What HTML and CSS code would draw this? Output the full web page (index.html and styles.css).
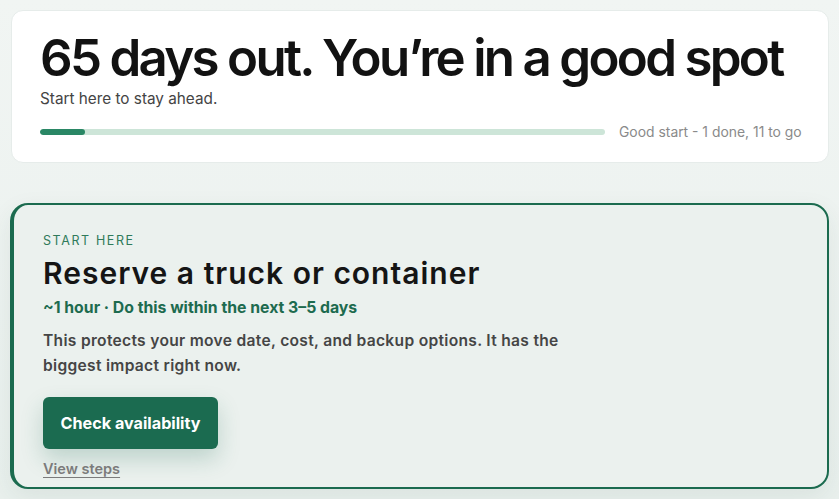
FILE: index.html
```html
<!DOCTYPE html>
<html>
<head>
<meta charset="utf-8">
<link rel="stylesheet" href="styles.css">
</head>
<body>
<main class="page">
  <section class="summary">
    <h1 class="summary-title">65 days out. You’re in a good spot</h1>
    <p class="summary-sub">Start here to stay ahead.</p>
    <div class="progress-row">
      <div class="progress-track"><div class="progress-fill" style="width:8%"></div></div>
      <span class="progress-label">Good start - 1 done, 11 to go</span>
    </div>
  </section>
  <section class="task">
    <div class="eyebrow">START HERE</div>
    <h2 class="task-title">Reserve a truck or container</h2>
    <div class="task-meta">~1 hour · Do this within the next 3–5 days</div>
    <p class="task-desc">This protects your move date, cost, and backup options. It has the biggest impact right now.</p>
    <button class="btn-primary">Check availability</button>
    <a class="link-steps" href="#">View steps</a>
  </section>
</main>
</body>
</html>
```
FILE: styles.css
```css
* { box-sizing: border-box; }
html, body { margin: 0; height: 100%; }
body {
  background: linear-gradient(180deg, #f1f5f3 0%, #e9f0ed 100%);
  font-family: Inter, "Open Sans", sans-serif;
  color: #141414;
  overflow: hidden;
}
.page {
  padding: 10px 10px 0 10px;
  display: flex;
  flex-direction: column;
  gap: 40px;
}
.summary {
  margin-left: 1px;
  background: #fff;
  border: 1px solid #e6ecea;
  border-radius: 12px;
  padding: 22px 28px 0 28px;
  height: 153px;
}
.summary-title {
  margin: 0;
  font-size: 51px;
  line-height: 50px;
  font-weight: 600;
  letter-spacing: -2.7px;
  white-space: nowrap;
  color: #121212;
}
.summary-sub {
  margin: 6px 0 0;
  font-size: 15.3px;
  line-height: 20px;
  color: #444;
}
.progress-row {
  display: flex;
  align-items: center;
  gap: 14px;
  height: 18px;
  margin-top: 14px;
}
.progress-track {
  flex: 0 0 565px;
  height: 6px;
  border-radius: 3px;
  background: #cde5d8;
  overflow: hidden;
}
.progress-fill {
  height: 100%;
  background: #2a8765;
  border-radius: 3px;
}
.progress-label {
  font-size: 13.9px;
  line-height: 18px;
  white-space: nowrap;
  color: #8a8a8a;
}
.task {
  background: #ebf1ee;
  border: 2px solid #1b6b4f;
  border-left-width: 4px;
  border-radius: 18px;
  padding: 28px 28px 0 29px;
  height: 286px;
  box-shadow: 0 8px 24px rgba(40, 80, 60, 0.08);
}
.eyebrow {
  font-size: 12.5px;
  line-height: 16px;
  letter-spacing: 1.6px;
  color: #2f7a5a;
}
.task-title {
  margin: 6px 0 0;
  font-size: 30px;
  line-height: 36px;
  font-weight: 600;
  letter-spacing: 1px;
  color: #151515;
}
.task-meta {
  margin-top: 7px;
  font-size: 15.8px;
  line-height: 20px;
  font-weight: 700;
  color: #1d6b4f;
}
.task-desc {
  margin: 10px 0 0;
  max-width: 545px;
  font-size: 15.6px;
  line-height: 25px;
  font-weight: 600;
  letter-spacing: 0.3px;
  color: #454545;
}
.btn-primary {
  display: block;
  margin-top: 19px;
  width: 175px;
  height: 52px;
  border: none;
  border-radius: 6px;
  background: #1b6b50;
  color: #fff;
  font-family: inherit;
  font-size: 16.2px;
  font-weight: 700;
  box-shadow: 0 10px 22px rgba(27, 107, 80, 0.22);
}
.link-steps {
  display: inline-block;
  margin-top: 11px;
  font-size: 14.5px;
  line-height: 18px;
  font-weight: 600;
  color: #7b7b7b;
  text-decoration: underline;
  text-underline-offset: 3px;
}
```
